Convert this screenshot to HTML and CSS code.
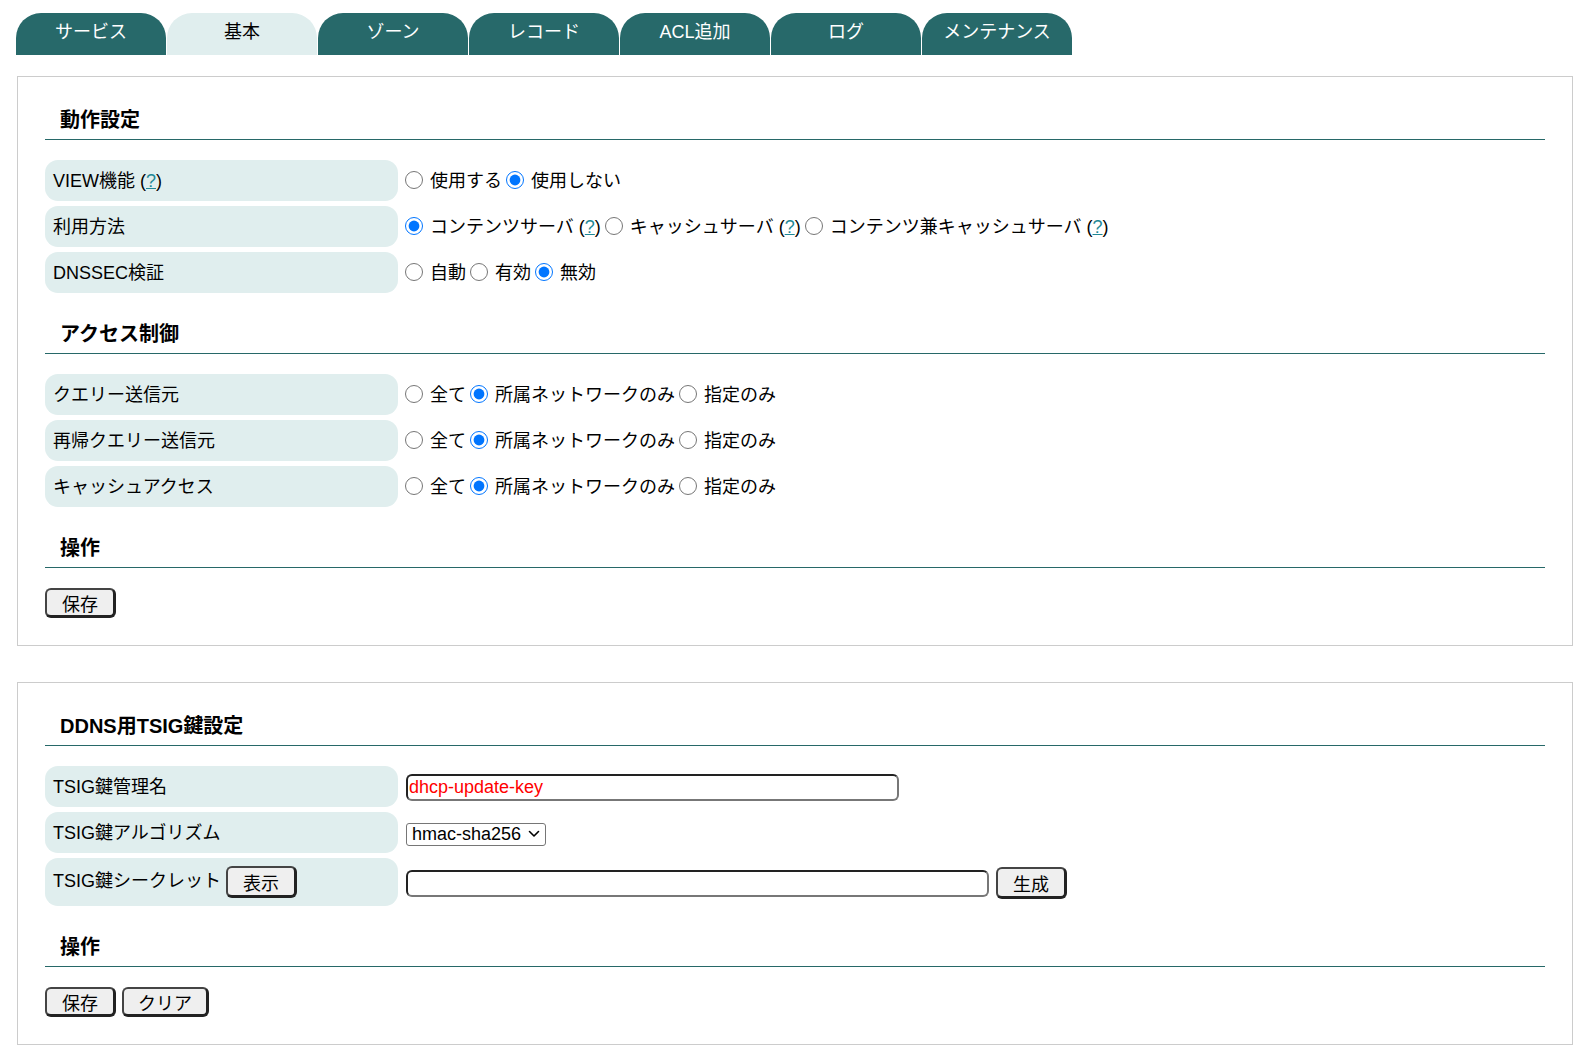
FILE: index.html
```html
<!DOCTYPE html>
<html lang="ja">
<head>
<meta charset="utf-8">
<title>DNS 基本設定</title>
<link rel="stylesheet" href="styles.css">
</head>
<body>
<nav class="tabs">
  <a class="tab">サービス</a>
  <a class="tab active">基本</a>
  <a class="tab">ゾーン</a>
  <a class="tab">レコード</a>
  <a class="tab">ACL追加</a>
  <a class="tab">ログ</a>
  <a class="tab">メンテナンス</a>
</nav>

<section class="panel">
  <h3 class="heading">動作設定</h3>
  <div class="rows">
    <div class="row">
      <div class="label">VIEW機能 (<a class="help">?</a>)</div>
      <div class="value">
        <label><input type="radio" name="view"> 使用する</label>
        <label><input type="radio" name="view" checked> 使用しない</label>
      </div>
    </div>
    <div class="row">
      <div class="label">利用方法</div>
      <div class="value">
        <label><input type="radio" name="mode" checked> コンテンツサーバ (<a class="help">?</a>)</label><label><input type="radio" name="mode"> キャッシュサーバ (<a class="help">?</a>)</label><label><input type="radio" name="mode"> コンテンツ兼キャッシュサーバ (<a class="help">?</a>)</label>
      </div>
    </div>
    <div class="row">
      <div class="label">DNSSEC検証</div>
      <div class="value">
        <label><input type="radio" name="dnssec"> 自動</label>
        <label><input type="radio" name="dnssec"> 有効</label>
        <label><input type="radio" name="dnssec" checked> 無効</label>
      </div>
    </div>
  </div>

  <h3 class="heading">アクセス制御</h3>
  <div class="rows">
    <div class="row">
      <div class="label">クエリー送信元</div>
      <div class="value">
        <label><input type="radio" name="q"> 全て</label>
        <label><input type="radio" name="q" checked> 所属ネットワークのみ</label><label><input type="radio" name="q"> 指定のみ</label>
      </div>
    </div>
    <div class="row">
      <div class="label">再帰クエリー送信元</div>
      <div class="value">
        <label><input type="radio" name="r"> 全て</label>
        <label><input type="radio" name="r" checked> 所属ネットワークのみ</label><label><input type="radio" name="r"> 指定のみ</label>
      </div>
    </div>
    <div class="row">
      <div class="label">キャッシュアクセス</div>
      <div class="value">
        <label><input type="radio" name="c"> 全て</label>
        <label><input type="radio" name="c" checked> 所属ネットワークのみ</label><label><input type="radio" name="c"> 指定のみ</label>
      </div>
    </div>
  </div>

  <h3 class="heading">操作</h3>
  <div class="actions">
    <button class="btn">保存</button>
  </div>
</section>

<section class="panel panel-second">
  <h3 class="heading">DDNS用TSIG鍵設定</h3>
  <div class="rows">
    <div class="row">
      <div class="label">TSIG鍵管理名</div>
      <div class="value">
        <input class="text name-input" type="text" value="dhcp-update-key">
      </div>
    </div>
    <div class="row">
      <div class="label">TSIG鍵アルゴリズム</div>
      <div class="value">
        <span class="select-wrap">
          <select class="select">
            <option>hmac-sha256</option>
          </select>
          <svg class="chevron" width="12" height="8" viewBox="0 0 12 8" aria-hidden="true"><path d="M1.5 1.5 L6 6 L10.5 1.5" fill="none" stroke="#000" stroke-width="1.6" stroke-linecap="round" stroke-linejoin="round"/></svg>
        </span>
      </div>
    </div>
    <div class="row">
      <div class="label label-tall">TSIG鍵シークレット <button class="btn btn-tall">表示</button></div>
      <div class="value">
        <input class="text secret-input" type="text" value=""><button class="btn btn-tall">生成</button>
      </div>
    </div>
  </div>

  <h3 class="heading">操作</h3>
  <div class="actions">
    <button class="btn">保存</button>
    <button class="btn">クリア</button>
  </div>
</section>
</body>
</html>
```

FILE: styles.css
```css
html, body {
  margin: 0;
  padding: 0;
  background: #ffffff;
}

body {
  padding: 13px 16px 10px 16px;
  font-family: "Liberation Sans", "Noto Sans CJK JP", sans-serif;
  font-size: 18px;
  color: #000;
}

.tabs {
  display: flex;
  gap: 1px;
  height: 42px;
}

.tab {
  width: 150px;
  height: 42px;
  box-sizing: border-box;
  padding-top: 8px;
  text-align: center;
  line-height: 22px;
  background: #27696a;
  color: #fff;
  border-radius: 25px 25px 0 0;
}

.tab.active {
  background: #e0eeee;
  color: #000;
}

.panel {
  margin-top: 21px;
  margin-left: 1px;
  width: 1556px;
  box-sizing: border-box;
  border: 1px solid #cccccc;
  padding: 0 27px 27px 27px;
}

.panel-second {
  margin-top: 36px;
}

.heading {
  margin: 30px 0 20px 0;
  padding: 0 15px 8px 15px;
  font-size: 20px;
  line-height: 22px;
  font-weight: bold;
  border-bottom: 1px solid #276868;
}

.panel .heading:first-child {
  margin-top: 32px;
}

.rows {
  display: flex;
  flex-direction: column;
  gap: 5px;
}

.row {
  display: grid;
  grid-template-columns: 353px 1fr;
  column-gap: 8px;
  align-items: center;
}

.label {
  background: #e0eeee;
  border-radius: 13px;
  padding: 9px 8px 7px 8px;
  line-height: 25px;
  min-height: 25px;
  white-space: nowrap;
}

.label-tall {
  padding: 8px 8px 8px 8px;
}

.value {
  line-height: 25px;
  white-space: nowrap;
  display: flex;
  align-items: center;
  padding-top: 2px;
}

.value label {
  white-space: pre;
}

.value label + label {
  margin-left: 5px;
}

.help {
  color: #1f8896;
  text-decoration: underline;
}

input[type="radio"] {
  width: 18px;
  height: 18px;
  margin: 0 2px 0 -1px;
  vertical-align: -2px;
}

.text {
  box-sizing: border-box;
  height: 27px;
  border-style: solid;
  border-width: 2px;
  border-color: #222 #777 #777 #222;
  border-radius: 6px;
  padding: 0 1px;
  font-family: "Liberation Sans", "Noto Sans CJK JP", sans-serif;
  font-size: 18px;
  background: #fff;
  outline: none;
}

.name-input {
  width: 493px;
  margin-left: 0;
  color: #ff0000;
}

.secret-input {
  width: 583px;
  margin-left: 0;
  margin-right: 7px;
}

.select-wrap {
  position: relative;
  display: inline-block;
  height: 23px;
}

.select {
  appearance: none;
  -webkit-appearance: none;
  height: 23px;
  width: 140px;
  font-family: "Liberation Sans", sans-serif;
  font-size: 18px;
  line-height: 21px;
  color: #000;
  border: 1px solid #767676;
  border-radius: 3px;
  background: #fff;
  padding: 0 20px 0 5px;
  margin: 0;
}

.chevron {
  position: absolute;
  right: 6px;
  top: 8px;
  pointer-events: none;
}

.btn {
  box-sizing: border-box;
  height: 30px;
  min-width: 71px;
  padding: 0 14px;
  font-family: "Liberation Sans", "Noto Sans CJK JP", sans-serif;
  font-size: 18px;
  color: #000;
  background: #efefef;
  border-style: solid;
  border-width: 2px 3px 3px 2px;
  border-color: #444 #222 #222 #444;
  border-radius: 6px;
}

.btn-tall {
  height: 32px;
  vertical-align: middle;
}

.actions {
  display: flex;
  gap: 6px;
}
```
